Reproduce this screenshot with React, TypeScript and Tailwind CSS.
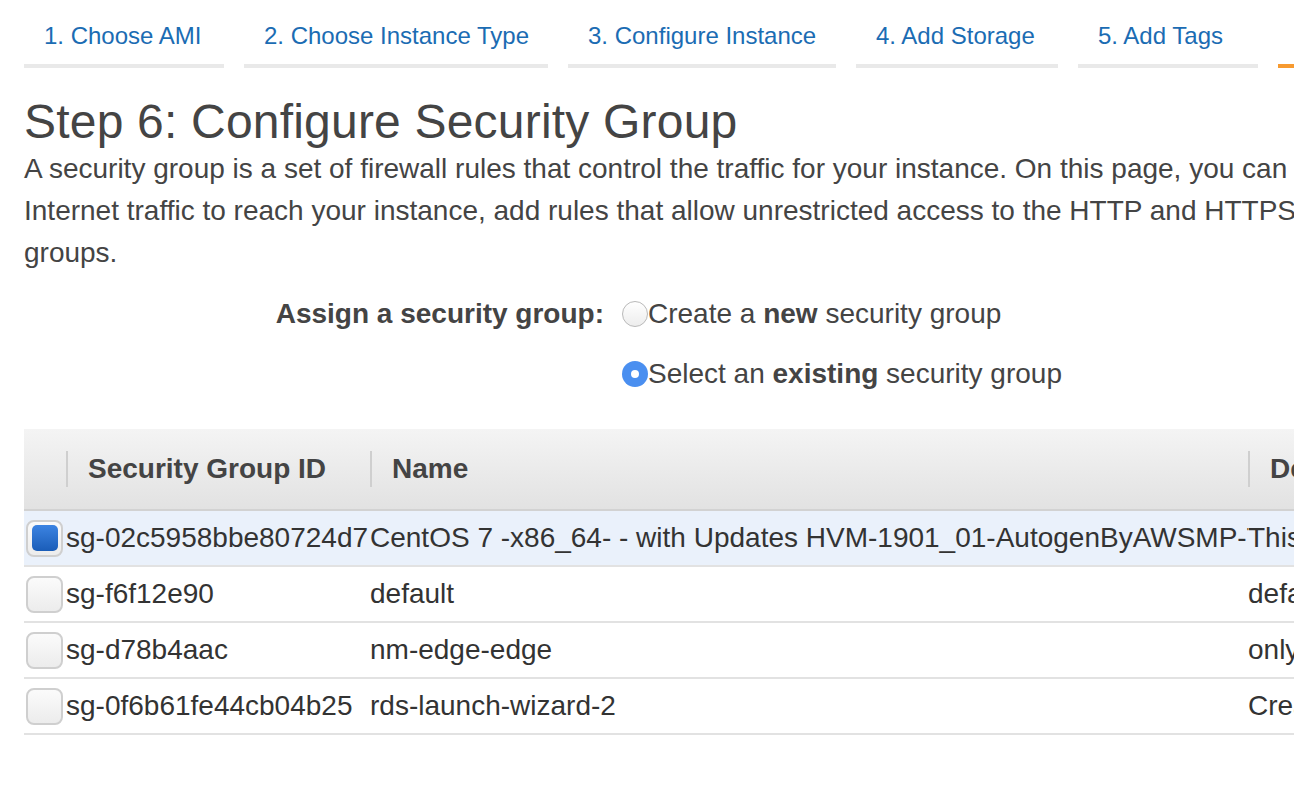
import React from "react";

const tabs = [
  { label: "1. Choose AMI", w: "w-[200px]" },
  { label: "2. Choose Instance Type", w: "w-[304px]" },
  { label: "3. Configure Instance", w: "w-[268px]" },
  { label: "4. Add Storage", w: "w-[202px]" },
  { label: "5. Add Tags", w: "w-[180px]" },
  { label: "6. Configure Security Group", w: "w-[360px]" },
];

const rows = [
  {
    id: "sg-02c5958bbe80724d7",
    name: "CentOS 7 -x86_64- - with Updates HVM-1901_01-AutogenByAWSMP-This",
    desc: "This security group was generated by AWS Marketplace",
    selected: true,
  },
  { id: "sg-f6f12e90", name: "default", desc: "default VPC security group", selected: false },
  { id: "sg-d78b4aac", name: "nm-edge-edge", desc: "only nm", selected: false },
  { id: "sg-0f6b61fe44cb04b25", name: "rds-launch-wizard-2", desc: "Created from the RDS Management Console", selected: false },
];

function Radio({ checked }: { checked: boolean }) {
  return checked ? (
    <span className="flex h-[26px] w-[26px] shrink-0 items-center justify-center rounded-full bg-[#4a8ff0]">
      <span className="h-[8px] w-[8px] rounded-full bg-white" />
    </span>
  ) : (
    <span className="h-[26px] w-[26px] shrink-0 rounded-full border border-[#b9b9b9] bg-gradient-to-b from-white to-[#ededed]" />
  );
}

function Checkbox({ checked }: { checked: boolean }) {
  return (
    <span className="flex h-[37px] w-[37px] items-center justify-center rounded-[8px] border-2 border-[#cfcfcf] bg-gradient-to-b from-[#fbfbfb] to-[#ececec]">
      {checked && <span className="h-[26px] w-[26px] rounded-[5px] bg-gradient-to-b from-[#3c84e2] to-[#1a5db8]" />}
    </span>
  );
}

export default function App() {
  return (
    <div className="h-screen w-screen overflow-hidden bg-white font-['Liberation_Sans',Arial,sans-serif]">
      <div className="w-[2600px] pl-[24px]">
        <div className="flex gap-[20px]">
          {tabs.map((t, i) => (
            <div
              key={t.label}
              className={`${t.w} whitespace-nowrap border-b-4 pl-[20px] pt-[22px] pb-[14px] text-[24px] leading-[28px] text-[#1b6cb3] ${
                i === 5 ? "border-[#f79a30]" : "border-[#e9e9e9]"
              }`}
            >
              {t.label}
            </div>
          ))}
        </div>

        <h1 className="mt-[28px] text-[48px] leading-[52px] font-normal tracking-[0.2px] text-[#444]">Step 6: Configure Security Group</h1>
        <p className="whitespace-nowrap text-[28px] leading-[42px] text-[#444]">
          A security group is a set of firewall rules that control the traffic for your instance. On this page, you can add rules to allow specific traffic to reach your instance. For example, if you want to set up a web server and allow
          <br />
          Internet traffic to reach your instance, add rules that allow unrestricted access to the HTTP and HTTPS ports. You can create a new security group or select from an existing one below. Learn more about Amazon EC2 security
          <br />
          groups.
        </p>

        <div className="mt-[19px] flex text-[28px] leading-[42px] text-[#444]">
          <div className="w-[580px] text-right font-bold">Assign a security group:</div>
          <div className="ml-[18px] flex flex-col gap-[18px]">
            <label className="flex items-center">
              <Radio checked={false} />
              <span>
                Create a <b>new</b> security group
              </span>
            </label>
            <label className="flex items-center">
              <Radio checked={true} />
              <span>
                Select an <b>existing</b> security group
              </span>
            </label>
          </div>
        </div>

        <div className="mt-[34px] text-[28px]">
          <div className="flex h-[82px] items-center border-b-2 border-[#d2d2d2] bg-gradient-to-b from-[#f4f4f4] to-[#e2e2e2] font-bold text-[#444]">
            <div className="w-[42px]" />
            <div className="flex w-[304px] items-center">
              <span className="h-[36px] w-[2px] bg-[#cfcfcf]" />
              <span className="pl-[20px]">Security Group ID</span>
            </div>
            <div className="flex w-[878px] items-center">
              <span className="h-[36px] w-[2px] bg-[#cfcfcf]" />
              <span className="pl-[20px]">Name</span>
            </div>
            <div className="flex items-center">
              <span className="h-[36px] w-[2px] bg-[#cfcfcf]" />
              <span className="pl-[20px]">Description</span>
            </div>
          </div>
          {rows.map((r) => (
            <div
              key={r.id}
              className={`flex h-[56px] items-center whitespace-nowrap border-b-2 border-[#e2e2e2] text-[#333] ${
                r.selected ? "bg-[#eaf1fb] text-[#222]" : ""
              }`}
            >
              <div className="flex w-[42px] pl-[2px]">
                <Checkbox checked={r.selected} />
              </div>
              <div className="w-[304px]">{r.id}</div>
              <div className="w-[878px] overflow-hidden">{r.name}</div>
              <div>{r.desc}</div>
            </div>
          ))}
        </div>
      </div>
    </div>
  );
}
